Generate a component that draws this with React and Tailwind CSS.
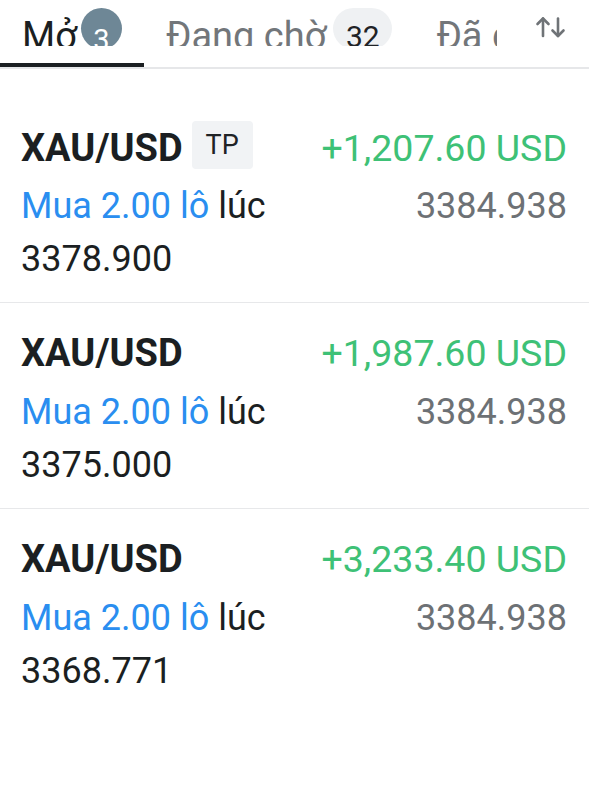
import React from "react";

const positions = [
  { id: 1, symbol: "XAU/USD", tp: true, profit: "+1,207.60 USD", lots: "2.00", open: "3378.900", current: "3384.938" },
  { id: 2, symbol: "XAU/USD", tp: false, profit: "+1,987.60 USD", lots: "2.00", open: "3375.000", current: "3384.938" },
  { id: 3, symbol: "XAU/USD", tp: false, profit: "+3,233.40 USD", lots: "2.00", open: "3368.771", current: "3384.938" },
];

const SortIcon = () => (
  <svg width="31" height="22" viewBox="0 0 31 22" fill="none" stroke="#6f7377" strokeWidth="2.6" strokeLinecap="round" strokeLinejoin="round">
    <path d="M8 20V2.5" />
    <path d="M2.5 8L8 2.5L13.5 8" />
    <path d="M23 2.5V20" />
    <path d="M17.5 14.5L23 20L28.5 14.5" />
  </svg>
);

const Tab = ({ label, active, children }) => (
  <div className="flex flex-col shrink-0 px-[22px]">
    <div className="flex items-start h-[46px] overflow-hidden">
      <span
        className={`mt-[17px] text-[38px] leading-[38px] whitespace-nowrap ${
          active ? "text-[#1b1f22]" : "text-[#72767a]"
        }`}
      >
        {label}
      </span>
      {children}
    </div>
    <div className="h-[17px]" />
    <div className={`h-[4px] -mx-[22px] ${active ? "bg-[#1b1f22]" : "bg-transparent"}`} />
  </div>
);

const Row = ({ p, last }) => (
  <div className={`pl-[21px] pr-[22px] pt-[28px] pb-[16px] ${last ? "" : "border-b border-[#e7e8ea]"}`}>
    <div className={`flex items-center justify-between ${p.tp ? "h-[48px]" : "h-[44px]"}`}>
      <div className="flex items-center">
        <span className={`text-[38px] leading-[44px] font-bold text-[#1b1f22] ${p.tp ? "translate-y-[3px]" : ""}`}>
          {p.symbol}
        </span>
        {p.tp && (
          <span className="ml-[9px] h-[48px] w-[61px] flex items-center justify-center rounded-[4px] bg-[#f1f3f5] text-[27px] text-[#1f2326]">
            TP
          </span>
        )}
      </div>
      <span className={`text-[37.5px] leading-[44px] text-[#3ec176] ${p.tp ? "translate-y-[3px]" : ""}`}>
        {p.profit}
      </span>
    </div>
    <div className="flex justify-between gap-8 mt-[11px]">
      <div className="flex-1 text-[36px] leading-[53px] text-[#1b1f22]">
        <span className="text-[#2a8ef0]">Mua {p.lots} lô</span> lúc {p.open}
      </div>
      <div className="shrink-0 text-[36px] leading-[53px] text-[#6d7175]">{p.current}</div>
    </div>
  </div>
);

export default function App() {
  return (
    <div className="w-[589px] h-[800px] bg-white overflow-hidden" style={{ fontFamily: "Roboto, 'Noto Sans', sans-serif" }}>
      {/* tabs */}
      <div className="flex border-b-2 border-[#e6e7e9]">
        <div className="flex w-[497px] overflow-hidden">
          <Tab label="Mở" active>
            <span className="ml-[4px] mt-[8px] shrink-0 w-[41px] h-[41px] rounded-full bg-[#6e8796] flex justify-center pt-[18px] text-[29px] leading-[29px] text-white">
              3
            </span>
          </Tab>
          <Tab label="Đang chờ">
            <span className="ml-[7px] mt-[8px] shrink-0 w-[59px] h-[41px] rounded-full bg-[#eff1f3] flex justify-center pt-[14px] text-[30px] leading-[30px] text-[#1f2326]">
              32
            </span>
          </Tab>
          <Tab label="Đã đóng" />
        </div>
        <div className="flex-1 flex justify-end pr-[23px] pt-[16px]">
          <SortIcon />
        </div>
      </div>

      {/* positions */}
      <div className="pt-[24px]">
        {positions.map((p, i) => (
          <Row key={p.id} p={p} last={i === positions.length - 1} />
        ))}
      </div>
    </div>
  );
}
